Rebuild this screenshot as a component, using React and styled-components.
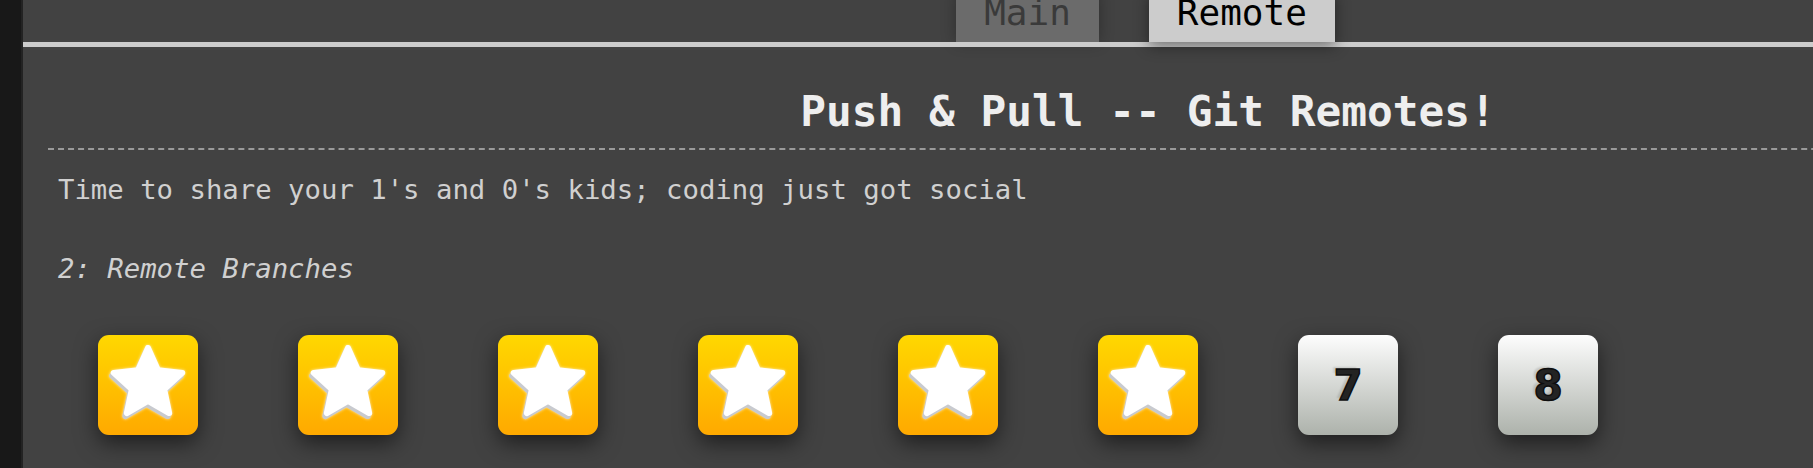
import styled, { createGlobalStyle } from "styled-components";

const Global = createGlobalStyle`
  html, body {
    margin: 0;
    background: #424242;
    overflow: hidden;
  }
`;

const Page = styled.div`
  display: flex;
  min-height: 468px;
  font-family: "DejaVu Sans Mono", "Liberation Mono", monospace;
`;

const Side = styled.div`
  flex: 0 0 21px;
  background: #181818;
  border-right: 2px solid #232323;
`;

const Panel = styled.div`
  flex: 0 0 2250px;
  background: #424242;
`;

const TabBar = styled.div`
  height: 42px;
  display: flex;
  justify-content: center;
  align-items: flex-end;
  gap: 50px;
  padding-right: 5px;
`;

const Tab = styled.div`
  position: relative;
  z-index: ${(p) => (p.$active ? 2 : 1)};
  padding: 0 28px 8px;
  font-size: 36px;
  line-height: 42px;
  background: ${(p) => (p.$active ? "#cccccc" : "#6b6b6b")};
  color: ${(p) => (p.$active ? "#000" : "#3a3a3a")};
  box-shadow: ${(p) =>
    p.$active ? "0 4px 14px rgba(0,0,0,0.45)" : "0 0 14px rgba(0,0,0,0.3)"};
`;

const Content = styled.div`
  position: relative;
  z-index: 1;
  border-top: 5px solid #cccccc;
  padding: 0 25px;
`;

const Title = styled.h1`
  margin: 39px 0 0;
  padding-bottom: 12px;
  border-bottom: 2px dashed #9a9a9a;
  text-align: center;
  font-size: 42.8px;
  font-weight: bold;
  color: #eeeeee;
`;

const Text = styled.p`
  margin: ${(p) => p.$margin};
  padding-left: 10px;
  font-size: 27.3px;
  color: #d0d0d0;
  font-style: ${(p) => (p.$italic ? "italic" : "normal")};
`;

const Tiles = styled.div`
  display: flex;
  gap: 100px;
  padding-left: 50px;
  margin-top: 51px;
`;

const Tile = styled.div`
  width: 100px;
  height: 100px;
  border-radius: 11px;
  display: flex;
  align-items: center;
  justify-content: center;
  box-shadow: 0 8px 22px rgba(0, 0, 0, 0.55);
  background: ${(p) =>
    p.$star
      ? "linear-gradient(#ffd800, #ffa900)"
      : "linear-gradient(#fdfdfd, #adb2ab)"};
`;

const Num = styled.span`
  font-family: "DejaVu Sans", "Liberation Sans", sans-serif;
  font-weight: bold;
  font-size: 42px;
  color: #232323;
  -webkit-text-stroke: 1.5px #0e0e0e;
  text-shadow: -3px -2px 2px rgba(0, 0, 0, 0.12);
`;

const StarSvg = styled.svg`
  width: 100px;
  height: 100px;
  filter: drop-shadow(0 0 1.5px rgba(255, 255, 255, 0.7));
`;

const STAR =
  "50,13 59.99,35.25 84.24,37.88 66.17,54.25 71.16,78.12 50,66 28.84,78.12 33.83,54.25 15.76,37.88 40.01,35.25";

function Star() {
  return (
    <StarSvg viewBox="0 0 100 100">
      <polygon
        points={STAR}
        transform="translate(-1.5 3)"
        fill="#c8cacf"
        stroke="#c8cacf"
        strokeWidth="6"
        strokeLinejoin="round"
      />
      <polygon
        points={STAR}
        fill="#ffffff"
        stroke="#ffffff"
        strokeWidth="6"
        strokeLinejoin="round"
      />
    </StarSvg>
  );
}

const levels = [
  { done: true },
  { done: true },
  { done: true },
  { done: true },
  { done: true },
  { done: true },
  { done: false, n: 7 },
  { done: false, n: 8 },
];

export default function App() {
  return (
    <>
      <Global />
      <Page>
        <Side />
        <Panel>
          <TabBar>
            <Tab>Main</Tab>
            <Tab $active>Remote</Tab>
          </TabBar>
          <Content>
            <Title>Push &amp; Pull -- Git Remotes!</Title>
            <Text $margin="24px 0 0">
              Time to share your 1's and 0's kids; coding just got social
            </Text>
            <Text $margin="48px 0 0" $italic>
              2: Remote Branches
            </Text>
            <Tiles>
              {levels.map((l, i) => (
                <Tile key={i} $star={l.done}>
                  {l.done ? <Star /> : <Num>{l.n}</Num>}
                </Tile>
              ))}
            </Tiles>
          </Content>
        </Panel>
      </Page>
    </>
  );
}
